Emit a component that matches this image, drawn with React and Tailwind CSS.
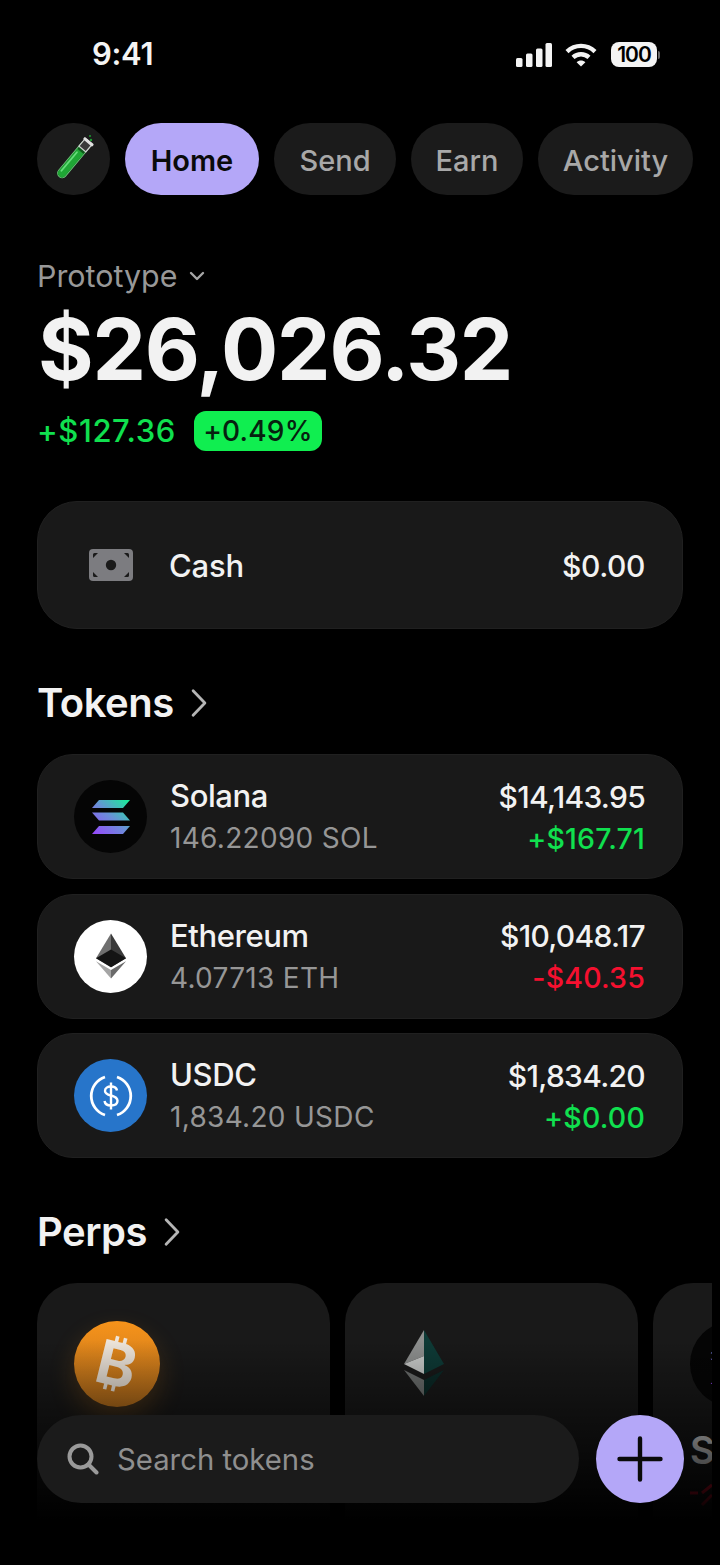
import React from "react";

const font = { fontFamily: "Inter, 'Noto Sans', sans-serif" };

const SignalIcon = () => (
  <svg width="36" height="24" viewBox="0 0 36 24" fill="#f4f4f4">
    <rect x="0" y="15" width="6.5" height="9" rx="1.5" />
    <rect x="10" y="10.5" width="6.5" height="13.5" rx="1.5" />
    <rect x="20" y="5.5" width="6.5" height="18.5" rx="1.5" />
    <rect x="29.5" y="0" width="6.5" height="24" rx="1.5" />
  </svg>
);

const WifiIcon = () => (
  <svg width="32" height="24" viewBox="0 0 32 24" fill="none" stroke="#f4f4f4" strokeWidth="4.4">
    <path d="M2 8.6 C10 1 22 1 30 8.6" />
    <path d="M8 14.4 C12.5 10.2 19.5 10.2 24 14.4" />
    <path d="M16 23.5 L11.6 19.2 C14 17 18 17 20.4 19.2 Z" fill="#f4f4f4" stroke="none" />
  </svg>
);

const TubeIcon = () => (
  <svg width="44" height="50" viewBox="0 0 44 50">
    <g transform="rotate(40 22 25)">
      <rect x="17.5" y="2" width="9" height="46" rx="4.5" fill="#0f5a1c" stroke="#6fc27b" strokeWidth="1" />
      <path d="M18 15 H26 V43.5 A4 4 0 0 1 18 43.5 Z" fill="#1fa635" />
      <rect x="19" y="17" width="1.8" height="26" rx="0.9" fill="#66dd7a" />
      <rect x="17.5" y="2" width="9" height="10" fill="#3a3a3a" stroke="#cfcfcf" strokeWidth="1.2" />
      <rect x="16" y="1" width="12" height="3" rx="1" fill="#e0e0e0" />
    </g>
    <circle cx="38" cy="2" r="1" fill="#1f9c33" />
    <circle cx="39" cy="6" r="1.2" fill="#1f9c33" />
  </svg>
);

const CashIcon = () => (
  <svg width="44" height="32" viewBox="0 0 44 32">
    <rect x="0" y="0" width="44" height="32" rx="4" fill="#7c7c80" />
    <circle cx="22" cy="16" r="5.2" fill="#1a1a1a" />
    <path d="M4 9 V5.5 A1.5 1.5 0 0 1 5.5 4 H9 Z" fill="#1a1a1a" />
    <path d="M40 9 V5.5 A1.5 1.5 0 0 0 38.5 4 H35 Z" fill="#1a1a1a" />
    <path d="M4 23 V26.5 A1.5 1.5 0 0 0 5.5 28 H9 Z" fill="#1a1a1a" />
    <path d="M40 23 V26.5 A1.5 1.5 0 0 1 38.5 28 H35 Z" fill="#1a1a1a" />
  </svg>
);

const SolanaIcon = ({ width = 38, height = 34 }) => (
  <svg width={width} height={height} viewBox="0 0 38 34">
    <defs>
      <linearGradient id="sol" x1="0" y1="1" x2="1" y2="0">
        <stop offset="0" stopColor="#9945ff" />
        <stop offset="0.5" stopColor="#6a8fd8" />
        <stop offset="1" stopColor="#14f195" />
      </linearGradient>
    </defs>
    <path d="M7 0 H38 L31 8 H0 Z M0 12.5 H31 L38 20.5 H7 Z M7 26 H38 L31 34 H0 Z" fill="url(#sol)" />
  </svg>
);

const EthIcon = () => (
  <svg width="30" height="48" viewBox="0 0 32 48">
    <path d="M16 0 L0 26.5 L16 36 Z" fill="#6f6f6f" />
    <path d="M16 0 L32 26.5 L16 36 Z" fill="#3a3a3a" />
    <path d="M16 17 L0 26.5 L16 36 L32 26.5 Z" fill="#141414" />
    <path d="M0 29.5 L16 48 V39 Z" fill="#a5a5a5" />
    <path d="M32 29.5 L16 48 V39 Z" fill="#6a6a6a" />
  </svg>
);

const UsdcIcon = () => (
  <svg width="44" height="44" viewBox="0 0 44 44" fill="none" stroke="#fff" strokeWidth="2.8">
    <path d="M16 3 A20 20 0 0 0 16 41" />
    <path d="M28 3 A20 20 0 0 1 28 41" />
    <path d="M28 16.5 C27.5 13.5 25 12.5 22 12.5 C18.5 12.5 16 14.2 16 17 C16 23 28.5 20 28.5 26.8 C28.5 30 25.5 31.5 22 31.5 C18.5 31.5 16 30 15.5 27" strokeWidth="2.4" />
    <path d="M22 8.5 V35.5" strokeWidth="2.4" />
  </svg>
);

const Chevron = ({ className }) => (
  <svg className={className} viewBox="0 0 16 28" fill="none" stroke="#b5b5b5" strokeWidth="2.6" strokeLinecap="round" strokeLinejoin="round">
    <path d="M2.5 2.5 L13.5 14 L2.5 25.5" />
  </svg>
);

const NavPill = ({ label, active, className }) => (
  <div
    className={`flex h-[72px] items-center justify-center rounded-full pt-[2px] text-[29px] leading-none ${className} ${
      active ? "bg-[#b4a7f8] font-semibold text-[#0a0a0a]" : "bg-[#1b1b1b] font-medium text-[#a8a8a8]"
    }`}
  >
    {label}
  </div>
);

const tokens = [
  { name: "Solana", sub: "146.22090 SOL", value: "$14,143.95", change: "+$167.71", up: true, bg: "bg-[#050505]", icon: <SolanaIcon /> },
  { name: "Ethereum", sub: "4.07713 ETH", value: "$10,048.17", change: "-$40.35", up: false, bg: "bg-white", icon: <EthIcon /> },
  { name: "USDC", sub: "1,834.20 USDC", value: "$1,834.20", change: "+$0.00", up: true, bg: "bg-[#2775ca]", icon: <UsdcIcon /> },
];

const TokenRow = ({ token }) => (
  <div className="flex h-[125px] items-center rounded-[36px] border border-[#202020] bg-[#191919] pl-[36px] pr-[37px]">
    <div className={`flex h-[73px] w-[73px] shrink-0 items-center justify-center rounded-full ${token.bg}`}>
      {token.icon}
    </div>
    <div className="ml-[23px] flex-1 pt-[1px]">
      <div className="text-[31px] font-[550] leading-[40px] tracking-[-0.4px] text-[#f2f2f2]">{token.name}</div>
      <div className="mt-[2px] text-[28px] leading-[40px] tracking-[0.3px] text-[#969696]">{token.sub}</div>
    </div>
    <div className="pt-[2px] text-right">
      <div className="text-[30px] font-[550] leading-[40px] tracking-[-0.7px] text-[#f2f2f2]">{token.value}</div>
      <div className={`mt-[2px] text-[28.5px] font-[550] leading-[40px] tracking-[0.2px] ${token.up ? "text-[#10e04f]" : "text-[#f5102f]"}`}>
        {token.change}
      </div>
    </div>
  </div>
);

const SectionTitle = ({ title }) => (
  <div className="flex items-center gap-[16px] text-[40px] font-semibold leading-[50px] tracking-[-0.5px] text-[#f2f2f2]">
    {title}
    <Chevron className="h-[30px] w-[18px]" />
  </div>
);

const BtcCoin = () => (
  <div className="flex h-[86px] w-[86px] items-center justify-center rounded-full bg-gradient-to-b from-[#f7931a] to-[#b9701c] shadow-[0_12px_26px_rgba(247,147,26,0.22)]">
    <span className="rotate-[14deg] text-[60px] font-bold leading-none text-[#eee5da]">₿</span>
  </div>
);

const PerpEth = () => (
  <svg width="42" height="66" viewBox="0 0 42 66">
    <path d="M20 0 L0 34 L20 26 Z" fill="#8d8f8e" />
    <path d="M20 26 L0 34 L20 44 Z" fill="#c9cbca" />
    <path d="M20 0 L40 34 L20 44 Z" fill="#0e3a36" />
    <path d="M0 40 L20 66 V50 Z" fill="#6e7170" />
    <path d="M40 40 L20 66 V50 Z" fill="#0b2a27" />
  </svg>
);

export default function App() {
  return (
    <div className="relative h-[1565px] w-[720px] overflow-hidden bg-black" style={font}>
      <div className="flex h-[123px] items-start justify-between pl-[92px] pr-[60px] pt-[34px]">
        <span className="text-[31px] font-semibold leading-[40px] tracking-[-0.3px] text-[#f4f4f4]">9:41</span>
        <div className="mt-[8px] flex items-center">
          <SignalIcon />
          <div className="ml-[13px]"><WifiIcon /></div>
          <div className="ml-[14px] flex h-[25px] w-[46px] items-center justify-center rounded-[8px] bg-[#f4f4f4] text-[21px] font-semibold tracking-[-1px] text-black">
            100
          </div>
          <div className="ml-[1px] h-[8px] w-[2px] rounded-r bg-[#666]" />
        </div>
      </div>

      <div className="flex items-center gap-[15px] pl-[37px]">
        <div className="flex h-[72px] w-[73px] items-center justify-center rounded-full bg-[#1b1b1b]">
          <TubeIcon />
        </div>
        <NavPill label="Home" active className="w-[134px]" />
        <NavPill label="Send" className="w-[122px]" />
        <NavPill label="Earn" className="w-[112px]" />
        <NavPill label="Activity" className="w-[155px]" />
      </div>

      <div className="px-[37px]">
        <div className="mt-[60px] flex items-center gap-[12px] text-[30.4px] leading-[42px] text-[#989898]">
          Prototype
          <svg width="16" height="10" viewBox="0 0 16 10" fill="none" stroke="#a5a5a5" strokeWidth="2.4" strokeLinecap="round" strokeLinejoin="round">
            <path d="M2 2 L8 8 L14 2" />
          </svg>
        </div>
        <div className="ml-[1px] mt-[3px] text-[85px] font-bold leading-[100px] tracking-[-1.2px] text-[#f2f2f2]">$26,026.32</div>
        <div className="mt-[11px] flex items-center gap-[18px]">
          <span className="text-[31px] font-medium leading-[40px] tracking-[0.6px] text-[#10e04f]">+$127.36</span>
          <span className="flex h-[40px] w-[128px] items-center justify-center rounded-[12px] bg-[#10ee50] text-[28px] font-medium tracking-[0.2px] text-[#06210f]">
            +0.49%
          </span>
        </div>

        <div className="mt-[50px] flex h-[128px] items-center rounded-[40px] border border-[#202020] bg-[#191919] pl-[51px] pr-[37px]">
          <CashIcon />
          <span className="ml-[36px] flex-1 pt-[2px] text-[31px] font-medium tracking-[-0.2px] text-[#f2f2f2]">Cash</span>
          <span className="pt-[2px] text-[30px] font-medium tracking-[-0.4px] text-[#f2f2f2]">$0.00</span>
        </div>

        <div className="mt-[49px]"><SectionTitle title="Tokens" /></div>
        <div className="mt-[26px] flex flex-col gap-[14.5px]">
          {tokens.map((t) => (
            <TokenRow key={t.name} token={t} />
          ))}
        </div>

        <div className="mt-[49px]"><SectionTitle title="Perps" /></div>
        <div className="mt-[26px] flex w-[675px] gap-[15px] overflow-hidden">
          <div className="h-[300px] w-[293px] shrink-0 rounded-[40px] bg-[#191919] pl-[37px] pt-[38px]">
            <BtcCoin />
          </div>
          <div className="h-[300px] w-[293px] shrink-0 rounded-[40px] bg-[#191919] pl-[59px] pt-[47px]">
            <PerpEth />
          </div>
          <div className="h-[300px] w-[293px] shrink-0 rounded-[40px] bg-[#191919] pl-[37px] pt-[38px]">
            <div className="flex h-[86px] w-[86px] items-center justify-center rounded-full bg-[#050505]">
              <SolanaIcon width={46} height={40} />
            </div>
            <div className="mt-[18px] text-[38px] font-semibold leading-[50px] text-[#f2f2f2]">S</div>
            <svg width="30" height="30" viewBox="0 0 30 30" fill="none" stroke="#f5102f" strokeWidth="3" className="mt-[6px]">
              <path d="M0 12 H8 M12 12 L22 4 M22 14 L12 24" />
            </svg>
          </div>
        </div>
      </div>

      {/* bottom fade + search bar sit over the perps row */}
      <div className="absolute inset-x-0 bottom-[45px] h-[180px] bg-gradient-to-b from-black/0 to-black" />
      <div className="absolute inset-x-0 bottom-0 h-[45px] bg-black" />
      <div className="absolute bottom-[62px] left-[37px] right-[36px] flex items-center gap-[17px]">
        <div className="flex h-[88px] flex-1 items-center rounded-full bg-[#1b1b1b] pl-[30px]">
          <svg width="32" height="32" viewBox="0 0 32 32" fill="none" stroke="#9a9a9a" strokeWidth="4" strokeLinecap="round">
            <circle cx="13.5" cy="13.5" r="11" />
            <path d="M22 22 L29.5 29.5" />
          </svg>
          <span className="ml-[18px] pt-[2px] text-[29.3px] text-[#8f8f8f]">Search tokens</span>
        </div>
        <div className="flex h-[88px] w-[88px] shrink-0 items-center justify-center rounded-full bg-[#b4a7f8]">
          <svg width="46" height="46" viewBox="0 0 46 46" stroke="#0a0a0a" strokeWidth="4.4" strokeLinecap="round">
            <path d="M23 2.5 V43.5 M2.5 23 H43.5" />
          </svg>
        </div>
      </div>
    </div>
  );
}
